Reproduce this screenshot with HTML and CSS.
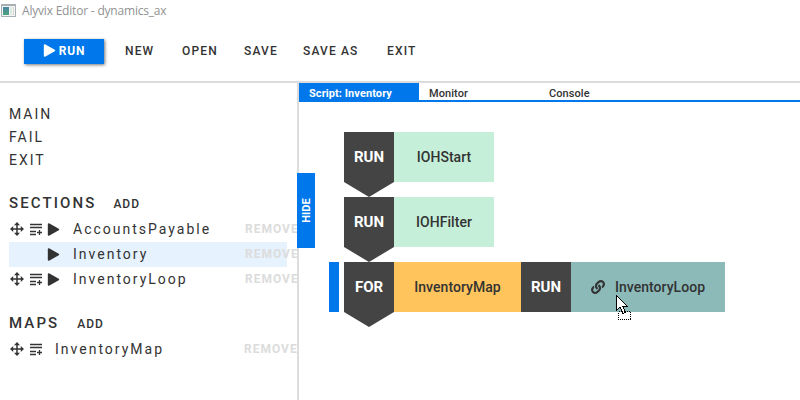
FILE: index.html
```html
<!DOCTYPE html>
<html lang="en">
<head>
<meta charset="utf-8">
<title>Alyvix Editor - dynamics_ax</title>
<link rel="stylesheet" href="styles.css">
</head>
<body>
<svg class="defs" width="0" height="0" aria-hidden="true">
  <symbol id="move" viewBox="0 0 14 14"><path d="M7 1v12M1 7h12" stroke="#333" stroke-width="1.5"/><path d="M7 0l3 3.2H4zM7 14l3-3.2H4zM0 7l3.2-3v6zM14 7l-3.2-3v6z" fill="#333"/></symbol>
  <symbol id="lines" viewBox="0 0 13 13"><path d="M0 1.500h12M0 4.500h12M0 8.500h6M0 11.500h6M7 9.500h5M9.500 7v5" stroke="#333" stroke-width="1.300"/></symbol>
  <symbol id="play" viewBox="0 0 12 12"><path d="M1.5 1v10l9-5z" fill="currentColor" stroke="currentColor" stroke-width="1.5" stroke-linejoin="round"/></symbol>
</svg>
<header class="titlebar">
  <svg class="app-icon" width="15" height="13" viewBox="0 0 15 13"><defs><linearGradient id="g" x2="0" y2="1"><stop stop-color="#4d83a6"/><stop offset="1" stop-color="#4aa47c"/></linearGradient></defs><path d="M0 0h15v13H0z" fill="#a9b0b5"/><path d="M1 2h13v10H1z" fill="#f3f5f5"/><path d="M2 3h6v8H2z" fill="url(#g)"/><path d="M9 3h2v8H9z" fill="#dde8e3"/><path d="M12 3h1v8h-1z" fill="#d4dbd9"/></svg>
  <span>Alyvix Editor - dynamics_ax</span>
</header>
<nav class="toolbar">
  <button class="run"><svg width="13" height="13"><use href="#play"/></svg>RUN</button>
  <span class="new">NEW</span><span class="open">OPEN</span><span class="save">SAVE</span><span class="save-as">SAVE AS</span><span>EXIT</span>
</nav>
<div class="workspace">
  <aside class="sidebar">
    <div class="entry">MAIN</div>
    <div class="entry">FAIL</div>
    <div class="entry">EXIT</div>
    <div class="heading sections"><b>SECTIONS</b><span>ADD</span></div>
    <div class="row"><svg class="move"><use href="#move"/></svg><svg class="lines"><use href="#lines"/></svg><svg class="play"><use href="#play"/></svg><span class="name">AccountsPayable</span><span class="remove">REMOVE</span></div>
    <div class="row selected"><i class="blank"></i><svg class="play"><use href="#play"/></svg><span class="name">Inventory</span><span class="remove">REMOVE</span></div>
    <div class="row"><svg class="move"><use href="#move"/></svg><svg class="lines"><use href="#lines"/></svg><svg class="play"><use href="#play"/></svg><span class="name">InventoryLoop</span><span class="remove">REMOVE</span></div>
    <div class="heading maps"><b>MAPS</b><span>ADD</span></div>
    <div class="row map"><svg class="move"><use href="#move"/></svg><svg class="lines"><use href="#lines"/></svg><span class="name">InventoryMap</span><span class="remove">REMOVE</span></div>
  </aside>
  <main class="editor">
    <div class="tabs"><span class="tab active">Script: Inventory</span><span class="tab">Monitor</span><span class="tab">Console</span></div>
    <div class="hide"><span>HIDE</span></div>
    <div class="script">
      <div class="step"><div class="marker"></div><div class="key arrow">RUN</div><div class="box green">IOHStart</div></div>
      <div class="step"><div class="marker"></div><div class="key arrow">RUN</div><div class="box green">IOHFilter</div></div>
      <div class="step"><div class="marker on"></div><div class="key arrow">FOR</div><div class="box orange">InventoryMap</div><div class="key">RUN</div><div class="box teal"><svg class="link" viewBox="0 0 512 512"><path fill="#333" d="M326.612 185.391c59.747 59.809 58.927 155.698.36 214.59-.11.12-.24.25-.36.37l-67.2 67.2c-59.27 59.27-155.699 59.262-214.96 0-59.27-59.26-59.27-155.7 0-214.96l37.106-37.106c9.84-9.84 26.786-3.3 27.294 10.606.648 17.722 3.826 35.527 9.69 52.721 1.986 5.822.567 12.262-3.783 16.612l-13.087 13.087c-28.026 28.026-28.905 73.66-1.155 101.96 28.024 28.579 74.086 28.749 102.325.51l67.2-67.19c28.191-28.191 28.073-73.757 0-101.83-3.701-3.694-7.429-6.564-10.341-8.569a16.037 16.037 0 0 1-6.947-12.606c-.396-10.567 3.348-21.456 11.698-29.806l21.054-21.055c5.521-5.521 14.182-6.199 20.584-1.731a152.482 152.482 0 0 1 20.522 17.197zM467.547 44.449c-59.261-59.262-155.69-59.27-214.96 0l-67.2 67.2c-.12.12-.25.25-.36.37-58.566 58.892-59.387 154.781.36 214.59a152.454 152.454 0 0 0 20.521 17.196c6.402 4.468 15.064 3.789 20.584-1.731l21.054-21.055c8.35-8.35 12.094-19.239 11.698-29.806a16.037 16.037 0 0 0-6.947-12.606c-2.912-2.005-6.64-4.875-10.341-8.569-28.073-28.073-28.191-73.639 0-101.83l67.2-67.19c28.239-28.239 74.3-28.069 102.325.51 27.75 28.3 26.872 73.934-1.155 101.96l-13.087 13.087c-4.35 4.35-5.769 10.79-3.783 16.612 5.864 17.194 9.042 34.999 9.69 52.721.509 13.906 17.454 20.446 27.294 10.606l37.106-37.106c59.271-59.259 59.271-155.699.001-214.959z"/></svg>InventoryLoop</div></div>
    </div>
  </main>
</div>
<svg class="cursor" width="16" height="26" viewBox="0 0 16 26" shape-rendering="crispEdges"><path d="M2.5 16.5h12v8h-12z" fill="#fff" stroke="#000" stroke-width="1.4" stroke-dasharray="1 1"/><path d="M.5.5v15l3.5-3.500 3 6.500 2.500-1-3-6.500h4.500z" fill="#fff" stroke="#000"/></svg>
</body>
</html>
```
FILE: styles.css
```css
* { box-sizing: border-box; }
body { margin: 0; width: 800px; height: 400px; overflow: hidden; display: flex; flex-direction: column; background: #fff; color: #333; font-family: Roboto, "Liberation Sans", sans-serif; }
svg { flex: none; }
.defs { position: absolute; }
.titlebar { height: 22px; display: flex; align-items: center; padding-left: 1px; gap: 6px; color: #929292; font: 12px/22px "Open Sans", "Noto Sans", sans-serif; letter-spacing: -.2px; }
.app-icon { margin-top: -2px; }
.toolbar { height: 61px; flex: none; display: flex; align-items: center; padding: 0 0 1px 24px; border-bottom: 2px solid #dcdcdc; font-size: 12px; font-weight: 500; letter-spacing: 1.15px; white-space: nowrap; }
.toolbar span { margin-top: -1px; }
.run { width: 80px; height: 25px; display: flex; align-items: center; justify-content: center; gap: 3px; margin: 0 21px 0 0; padding: 0 0 1px; border: 0; background: #0078eb; color: #fff; box-shadow: 1px 1px 3px #0008; font: bold 12px Roboto, sans-serif; letter-spacing: .8px; }
.new { width: 57px; }
.open { width: 62px; }
.save { width: 59px; }
.save-as { width: 84px; }
.workspace { flex: 1; display: flex; }
.sidebar { width: 299px; padding: 20px 10px 0 9px; border-right: 2px solid #dcdcdc; font-size: 14px; letter-spacing: 2px; }
.entry { height: 23px; line-height: 23px; }
.heading { display: flex; align-items: center; font-size: 15px; letter-spacing: 2.1px; }
.heading b { font-weight: 500; }
.heading span { font-size: 12px; font-weight: 500; letter-spacing: 1px; margin-top: 2px; }
.sections { height: 45px; padding-top: 16px; gap: 17px; }
.maps { height: 45px; padding-top: 17px; gap: 18px; }
.row { width: 278px; height: 25px; display: flex; align-items: center; padding-bottom: 1px; white-space: nowrap; }
.selected { background: #e6f2fe; }
.move { width: 14px; height: 14px; margin-left: 1px; }
.lines { width: 13px; height: 13px; margin-left: 6px; }
.play { width: 13px; height: 13px; margin-left: 4px; }
.blank { width: 34px; }
.name { margin-left: 13px; }
.map .name { margin-left: 12px; }
.remove { width: 42px; margin-left: auto; color: #dcdcdc; font-size: 12px; font-weight: bold; letter-spacing: 1px; }
.map .remove { width: 43px; }
.editor { flex: 1; position: relative; }
.tabs { height: 19px; display: flex; border-bottom: 2px solid #0078eb; font-size: 11px; font-weight: 500; line-height: 21px; letter-spacing: .08px; }
.tab { width: 120px; height: 19px; padding-left: 10px; }
.tab:not(.active) { height: 17px; }
.active { background: #0078eb; color: #fff; font-weight: bold; }
.hide { position: absolute; left: -2px; top: 90px; width: 18px; height: 75px; display: flex; align-items: center; justify-content: center; background: #0078eb; color: #fff; font-size: 11px; font-weight: bold; }
.hide span { transform: rotate(-90deg); }
.script { padding: 30px 0 0 30px; display: flex; flex-direction: column; gap: 15px; }
.step { height: 50px; display: flex; font-size: 14px; font-weight: 500; line-height: 50px; }
.marker { width: 10px; margin-right: 5px; }
.on { background: #0078eb; }
.key { width: 50px; background: #444; color: #fff; text-align: center; font-size: 15px; font-weight: bold; }
.arrow { height: 65px; clip-path: polygon(0 0, 100% 0, 100% 50px, 50% 100%, 0 50px); }
.box { display: flex; align-items: center; justify-content: center; letter-spacing: .04px; }
.green { width: 100px; background: #c6efd9; }
.orange { width: 127px; background: #ffc45c; }
.teal { width: 154px; background: #8bbab9; }
.link { width: 14px; height: 14px; margin-right: 10px; }
.cursor { position: absolute; left: 616px; top: 295px; }
```
